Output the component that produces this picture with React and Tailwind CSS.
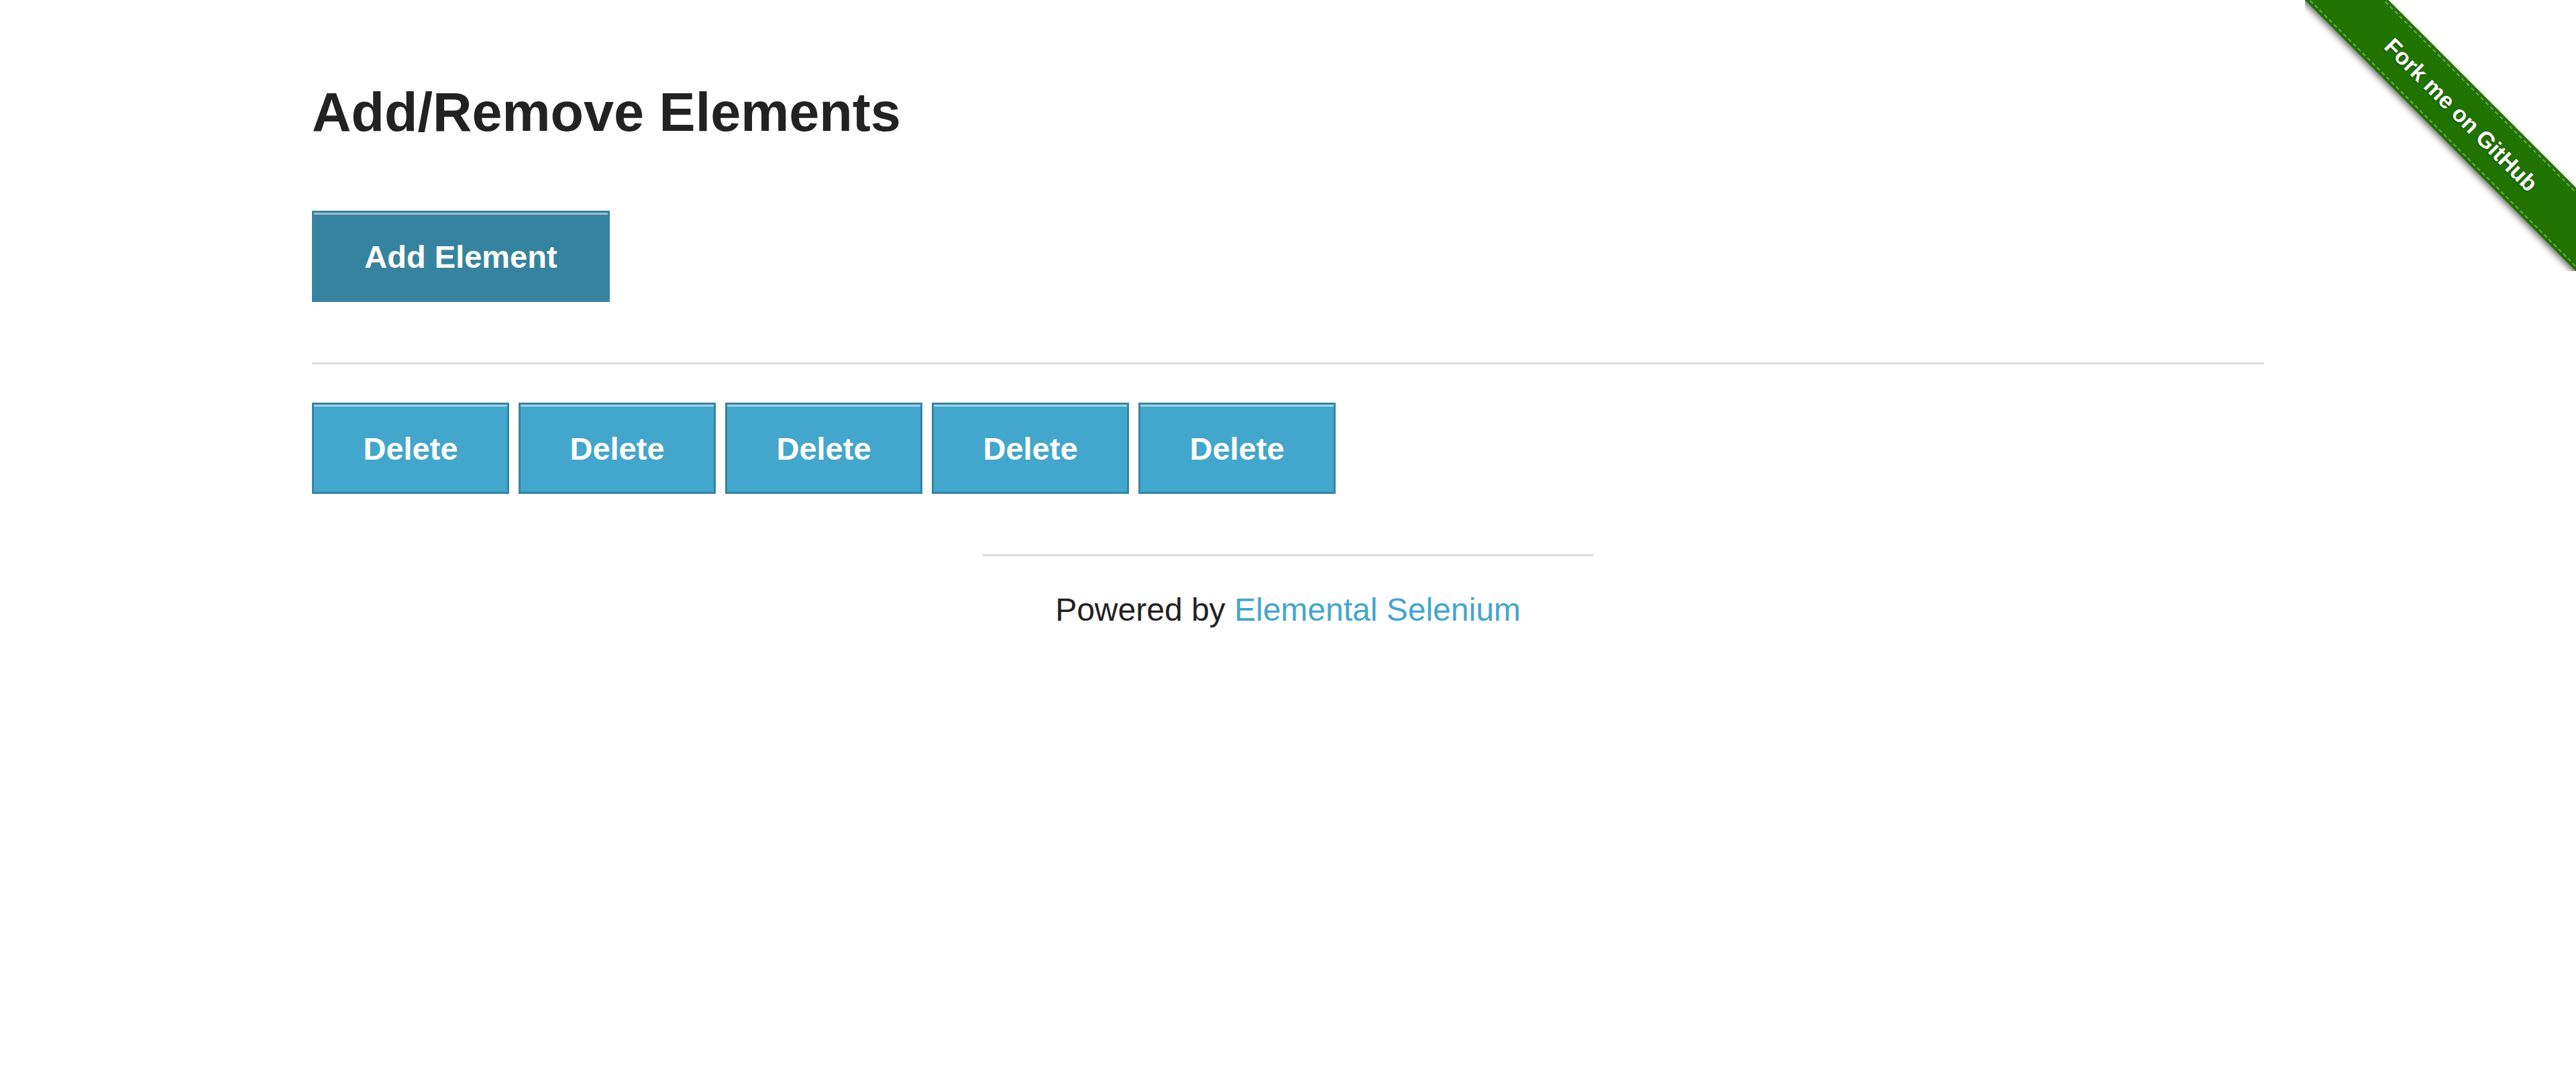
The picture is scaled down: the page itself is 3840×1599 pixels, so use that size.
export default function App() {
  const deletes = [0, 1, 2, 3, 4];
  return (
    <div className="relative min-h-[1599px] overflow-hidden bg-white font-['Liberation_Sans',Arial,sans-serif] text-[#222222]">
      <div className="mx-auto w-[2910px]">
        <h3 className="mt-[127px] text-[81px] font-bold leading-[81px] text-[#222222]">
          Add/Remove Elements
        </h3>
        <button className="mt-[106px] block h-[136px] w-[444px] border-[3px] border-[#3683a0] bg-[#3683a0] text-center text-[47px] font-bold leading-none text-white shadow-[inset_0_3px_0_rgba(255,255,255,0.5)]">
          Add Element
        </button>
        <hr className="mt-[90px] border-0 border-t-[3px] border-[#dddddd]" />
        <div className="mt-[57px] flex gap-[14px]">
          {deletes.map((i) => (
            <button
              key={i}
              className="h-[136px] w-[294px] border-[3px] border-[#3585a3] bg-[#43a6cc] text-center text-[47px] font-bold leading-none text-white shadow-[inset_0_3px_0_rgba(255,255,255,0.5)]"
            >
              Delete
            </button>
          ))}
        </div>
      </div>
      <div className="mx-auto mt-[90px] w-[910px]">
        <hr className="border-0 border-t-[3px] border-[#dddddd]" />
        <div className="mt-[42px] text-center text-[48px] leading-[75px] text-[#222222]">
          Powered by <a className="text-[#43a6cc]">Elemental Selenium</a>
        </div>
      </div>
      <div className="absolute right-0 top-0 h-[404px] w-[404px] overflow-hidden">
        <div className="absolute left-[-67px] top-[127px] flex h-[88px] w-[600px] rotate-45 items-center justify-center bg-[#217300] shadow-[0_4px_10px_rgba(0,0,0,0.55)]">
          <div className="absolute inset-x-0 top-[4px] border-t-[2px] border-dashed border-[rgba(255,255,255,0.35)]" />
          <div className="absolute inset-x-0 bottom-[4px] border-t-[2px] border-dashed border-[rgba(255,255,255,0.35)]" />
          <span className="text-[34px] font-bold text-white [text-shadow:0_1px_2px_rgba(0,0,0,0.5)]">
            Fork me on GitHub
          </span>
        </div>
      </div>
    </div>
  );
}
